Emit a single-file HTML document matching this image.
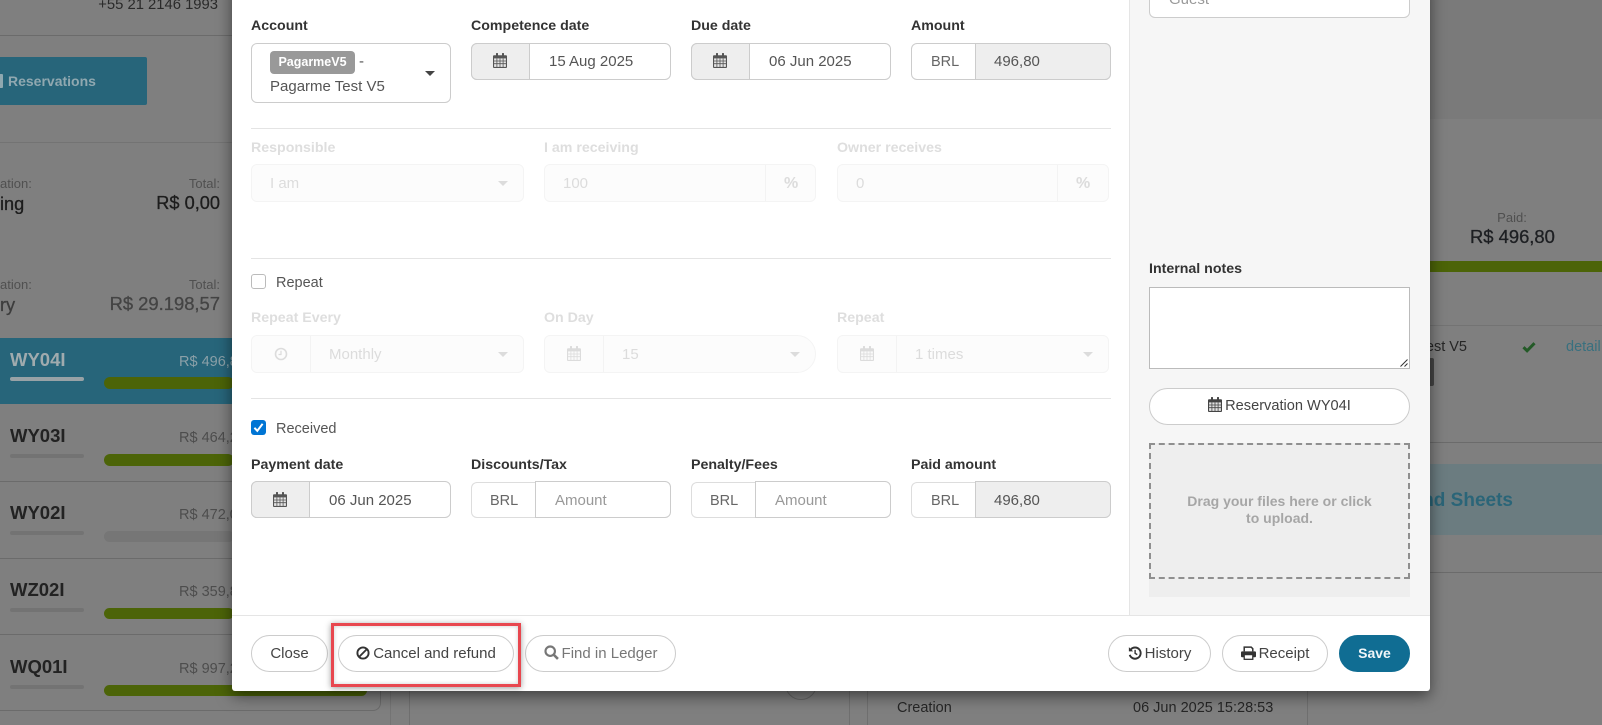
<!DOCTYPE html>
<html><head><meta charset="utf-8"><style>
html,body{margin:0;padding:0}
body{width:1602px;height:725px;overflow:hidden;position:relative;background:#7f7f7f;font-family:"Liberation Sans",sans-serif}
div,span.a{position:absolute;box-sizing:border-box}
svg{position:absolute;overflow:visible}
.t{white-space:nowrap;line-height:20px;height:20px}
.r{text-align:right}
.l{font-weight:bold;font-size:14.2px;color:#333;margin-top:1px}
.ld{font-weight:bold;font-size:14.2px;color:#dedede;margin-top:1px}
.f{border:1px solid #ccc;border-radius:6px;background:#fff}
.g{background:#eee}
.fd{border:1px solid #f4f4f4;border-radius:6px;background:#fcfcfc}
.v{font-size:15px;color:#555;margin-top:1px}
.vd{font-size:15px;color:#dcdcdc;margin-top:1px}
.brl{font-size:14.5px}
.sep{background:#e4e4e4;height:1px}
.b{border:1px solid #ccc;border-radius:19px;background:#fff;height:37px;top:635px;font-size:15px;color:#444;text-align:center;line-height:35px;white-space:nowrap}
.b svg{position:static;vertical-align:-2px;margin-right:3px}
.line{background:#6b6b6b;height:1px}
.bar{background:#4c6408;border-radius:6px}
.code{font-weight:bold;font-size:18.5px;color:#222}
.pr{font-size:14.5px;color:#4d4d4d}
.ul{background:#737373;height:4px;left:10px;width:74px;border-radius:2px}
.d{background:#ebebeb;width:1px}
.m{-webkit-text-stroke:.3px currentColor}
</style></head><body>
<svg width="0" height="0" style="position:absolute"><defs>
<symbol id="cal" viewBox="0 0 14 15"><path d="M0 3.2a1 1 0 0 1 1-1h12a1 1 0 0 1 1 1V14a1 1 0 0 1-1 1H1a1 1 0 0 1-1-1z" fill="currentColor"/><rect x="1.1" y="5.4" width="11.8" height="8.5" fill="#fff" opacity=".85"/><path d="M1 8h12M1 10.7h12M3.9 5.4V14M7 5.4V14M10.1 5.4V14" stroke="currentColor" stroke-width=".8" fill="none"/><rect x="3" y="0" width="2" height="4" rx=".6" fill="currentColor"/><rect x="9" y="0" width="2" height="4" rx=".6" fill="currentColor"/></symbol>
</defs></svg>

<!-- background left -->
<div class="t r" style="left:60px;width:158px;top:-5px;font-size:14.8px;color:#2a2a2a">+55 21 2146 1993</div>
<div class="line" style="left:0;width:232px;top:35px"></div>
<div style="left:0;top:57px;width:147px;height:48px;background:#27657a;border-radius:0 2px 2px 0"></div>
<div style="left:-3px;top:74px;width:6px;height:14px;background:#8fa8b0;border-radius:1px"></div>
<div class="t" style="left:8px;top:71px;font-size:14px;font-weight:bold;color:#90a8b0">Reservations</div>
<div class="line" style="left:0;width:232px;top:142px;background:#737373"></div>
<div class="t r" style="left:0;width:31px;top:174px;font-size:13px;color:#505050">ation:</div>
<div class="t m" style="left:0;top:194px;font-size:18.2px;color:#1d1d1d;width:24px;overflow:hidden;text-align:right">ing</div>
<div class="t r" style="left:120px;width:100px;top:174px;font-size:13px;color:#505050">Total:</div>
<div class="t r m" style="left:100px;width:120px;top:193px;font-size:18.2px;color:#1d1d1d">R$ 0,00</div>
<div class="t r" style="left:0;width:31px;top:275px;font-size:13px;color:#505050">ation:</div>
<div class="t m" style="left:0;top:295px;font-size:18.2px;color:#3d3d3d;width:14px;text-align:right">ry</div>
<div class="t r" style="left:120px;width:100px;top:275px;font-size:13px;color:#505050">Total:</div>
<div class="t r m" style="left:60px;width:160px;top:294px;font-size:18.4px;color:#444">R$ 29.198,57</div>

<div style="left:0;top:338px;width:240px;height:66px;background:#27657a"></div>
<div class="t code" style="left:10px;top:350px;color:#a0abae">WY04I</div>
<div style="left:10px;top:377px;width:74px;height:4px;background:#98a2a6;border-radius:2px"></div>
<div class="t pr" style="left:179px;top:352px;color:#8ba0a8">R$ 496,8</div>
<div class="bar" style="left:104px;top:377px;width:130px;height:12px"></div>

<div class="t code" style="left:10px;top:426px">WY03I</div>
<div class="ul" style="top:454px"></div>
<div class="t pr" style="left:179px;top:428px">R$ 464,2</div>
<div class="bar" style="left:104px;top:454px;width:130px;height:12px"></div>
<div class="line" style="left:0;width:232px;top:481px"></div>

<div class="t code" style="left:10px;top:503px">WY02I</div>
<div class="ul" style="top:531px"></div>
<div class="t pr" style="left:179px;top:505px">R$ 472,0</div>
<div class="bar" style="left:104px;top:531px;width:130px;height:11px;background:#767676"></div>
<div class="line" style="left:0;width:232px;top:558px"></div>

<div class="t code" style="left:10px;top:580px">WZ02I</div>
<div class="ul" style="top:608px"></div>
<div class="t pr" style="left:179px;top:582px">R$ 359,8</div>
<div class="bar" style="left:104px;top:608px;width:130px;height:11px"></div>
<div class="line" style="left:0;width:232px;top:634px"></div>

<div class="t code" style="left:10px;top:657px">WQ01I</div>
<div class="ul" style="top:685px"></div>
<div class="t pr" style="left:179px;top:659px">R$ 997,2</div>
<div class="bar" style="left:104px;top:685px;width:263px;height:11px"></div>
<div style="left:-5px;top:640px;width:386px;height:71px;border:1px solid #6b6b6b;border-top:0;border-left:0;border-radius:0 0 8px 0"></div>

<!-- background bottom -->
<div style="left:390px;top:690px;width:1px;height:35px;background:#747474"></div>
<div style="left:409px;top:690px;width:1px;height:35px;background:#6f6f6f"></div>
<div style="left:849px;top:690px;width:1px;height:35px;background:#6f6f6f"></div>
<div style="left:867px;top:690px;width:1px;height:35px;background:#6f6f6f"></div>
<div style="left:1307px;top:690px;width:1px;height:35px;background:#6f6f6f"></div>
<div style="left:785px;top:668px;width:32px;height:32px;border:1px solid #666;border-radius:50%"></div>
<div class="t" style="left:897px;top:698px;font-size:14.5px;color:#262626">Creation</div>
<div class="t" style="left:1133px;top:698px;font-size:14.5px;color:#262626">06 Jun 2025 15:28:53</div>

<!-- background right -->
<div style="left:1430px;top:0;width:172px;height:119px;background:#7a7a7a"></div>
<div class="t" style="left:1482px;width:60px;text-align:center;top:208px;font-size:13px;color:#4f4f4f">Paid:</div>
<div class="t m" style="left:1470px;top:227px;font-size:18.4px;color:#1d1f22">R$ 496,80</div>
<div style="left:1430px;top:261px;width:172px;height:11px;background:#4c6408"></div>
<div class="line" style="left:1430px;width:172px;top:325px;background:#737373"></div>
<div class="t" style="left:1423px;top:337px;width:44px;font-size:14.5px;color:#262626;text-align:right">est V5</div>
<svg style="left:1522px;top:341px" width="14" height="12" viewBox="0 0 14 12"><path d="M1.5 6.2l3.6 3.6L12.5 2.2" fill="none" stroke="#235a27" stroke-width="3"/></svg>
<div class="t" style="left:1566px;top:337px;font-size:14.5px;color:#38707f">detail</div>
<div style="left:1428px;top:358px;width:6px;height:28px;background:#454545;border-radius:2px"></div>
<div class="line" style="left:1430px;width:172px;top:442px"></div>
<div style="left:1430px;top:464px;width:172px;height:71px;background:#6b7c80"></div>
<div class="t r" style="left:1400px;width:113px;top:491px;font-size:19px;font-weight:bold;color:#2a6578">nd Sheets</div>
<div class="line" style="left:1430px;width:172px;top:572px"></div>

<!-- modal -->
<div style="left:232px;top:-20px;width:1198px;height:711px;background:#fff;border-radius:0 0 3px 3px;box-shadow:0 5px 15px rgba(0,0,0,.5)"></div>
<div style="left:1129px;top:0;width:301px;height:615px;background:#f6f6f6;border-left:1px solid #e5e5e5"></div>
<div style="left:232px;top:615px;width:1198px;height:1px;background:#e5e5e5"></div>

<!-- row 1 -->
<div class="t l" style="left:251px;top:15px">Account</div>
<div class="t l" style="left:471px;top:15px">Competence date</div>
<div class="t l" style="left:691px;top:15px">Due date</div>
<div class="t l" style="left:911px;top:15px">Amount</div>

<div class="f" style="left:251px;top:43px;width:200px;height:60px"></div>
<div style="left:270px;top:51px;width:85px;height:23px;background:#999;border-radius:4px;color:#fff;font-weight:bold;font-size:12.5px;text-align:center;line-height:22px">PagarmeV5</div>
<div class="t v" style="left:359px;top:51px">-</div>
<div class="t v" style="left:270px;top:76px">Pagarme Test V5</div>
<div style="left:425px;top:71px;width:0;height:0;border-left:5px solid transparent;border-right:5px solid transparent;border-top:5px solid #444"></div>

<div class="f" style="left:471px;top:43px;width:200px;height:37px"></div>
<div class="g" style="left:471px;top:43px;width:59px;height:37px;border:1px solid #ccc;border-radius:6px 0 0 6px"></div>
<svg style="left:493px;top:53px;color:#555" width="14" height="15"><use href="#cal"/></svg>
<div class="t v" style="left:549px;top:51px">15 Aug 2025</div>

<div class="f" style="left:691px;top:43px;width:200px;height:37px"></div>
<div class="g" style="left:691px;top:43px;width:59px;height:37px;border:1px solid #ccc;border-radius:6px 0 0 6px"></div>
<svg style="left:713px;top:53px;color:#555" width="14" height="15"><use href="#cal"/></svg>
<div class="t v" style="left:769px;top:51px">06 Jun 2025</div>

<div class="f" style="left:911px;top:43px;width:200px;height:37px"></div>
<div class="g" style="left:975px;top:43px;width:136px;height:37px;border:1px solid #ccc;border-radius:0 6px 6px 0"></div>
<div class="t v brl" style="left:931px;top:51px;color:#666">BRL</div>
<div class="t v" style="left:994px;top:51px">496,80</div>

<div class="sep" style="left:251px;width:860px;top:128px"></div>

<!-- row 2 disabled -->
<div class="t ld" style="left:251px;top:137px">Responsible</div>
<div class="t ld" style="left:544px;top:137px">I am receiving</div>
<div class="t ld" style="left:837px;top:137px">Owner receives</div>
<div class="fd" style="left:251px;top:164px;width:273px;height:38px"></div>
<div class="t vd" style="left:270px;top:173px">I am</div>
<div style="left:498px;top:181px;width:0;height:0;border-left:5px solid transparent;border-right:5px solid transparent;border-top:5px solid #dcdcdc"></div>
<div class="fd" style="left:544px;top:164px;width:272px;height:38px"></div>
<div class="d" style="left:765px;top:165px;height:36px;background:#f3f3f3"></div>
<div class="t vd" style="left:563px;top:173px">100</div>
<div class="t vd" style="left:784px;top:173px;font-weight:bold;font-size:16px">%</div>
<div class="fd" style="left:837px;top:164px;width:272px;height:38px"></div>
<div class="d" style="left:1057px;top:165px;height:36px;background:#f3f3f3"></div>
<div class="t vd" style="left:856px;top:173px">0</div>
<div class="t vd" style="left:1076px;top:173px;font-weight:bold;font-size:16px">%</div>

<div class="sep" style="left:251px;width:860px;top:258px"></div>

<div style="left:251px;top:274px;width:15px;height:15px;border:1px solid #bbb;border-radius:3px;background:#fff"></div>
<div class="t v" style="left:276px;top:272px;font-size:14.5px">Repeat</div>

<!-- row 3 disabled -->
<div class="t ld" style="left:251px;top:307px">Repeat Every</div>
<div class="t ld" style="left:544px;top:307px">On Day</div>
<div class="t ld" style="left:837px;top:307px">Repeat</div>
<div class="fd" style="left:251px;top:335px;width:273px;height:38px"></div>
<div class="d" style="left:310px;top:336px;height:36px;background:#f3f3f3"></div>
<svg style="left:274px;top:347px" width="14" height="14" viewBox="0 0 14 14"><circle cx="7" cy="7" r="5.5" fill="none" stroke="#dcdcdc" stroke-width="1.6"/><path d="M7 3.8V7.5H4.5" fill="none" stroke="#dcdcdc" stroke-width="1.2"/></svg>
<div class="t vd" style="left:329px;top:344px">Monthly</div>
<div style="left:498px;top:352px;width:0;height:0;border-left:5px solid transparent;border-right:5px solid transparent;border-top:5px solid #dcdcdc"></div>
<div class="fd" style="left:544px;top:335px;width:272px;height:38px;border-radius:6px 19px 19px 6px"></div>
<div class="d" style="left:603px;top:336px;height:36px;background:#f3f3f3"></div>
<svg style="left:567px;top:346px;color:#dcdcdc" width="14" height="15"><use href="#cal"/></svg>
<div class="t vd" style="left:622px;top:344px">15</div>
<div style="left:790px;top:352px;width:0;height:0;border-left:5px solid transparent;border-right:5px solid transparent;border-top:5px solid #dcdcdc"></div>
<div class="fd" style="left:837px;top:335px;width:272px;height:38px"></div>
<div class="d" style="left:896px;top:336px;height:36px;background:#f3f3f3"></div>
<svg style="left:860px;top:346px;color:#dcdcdc" width="14" height="15"><use href="#cal"/></svg>
<div class="t vd" style="left:915px;top:344px">1 times</div>
<div style="left:1083px;top:352px;width:0;height:0;border-left:5px solid transparent;border-right:5px solid transparent;border-top:5px solid #dcdcdc"></div>

<div class="sep" style="left:251px;width:860px;top:398px"></div>

<div style="left:251px;top:420px;width:15px;height:15px;border-radius:3px;background:#0075d4"></div>
<svg style="left:251px;top:420px" width="15" height="15" viewBox="0 0 15 15"><path d="M3.4 7.8l2.9 3 5.3-7" fill="none" stroke="#fff" stroke-width="2"/></svg>
<div class="t v" style="left:276px;top:418px;font-size:14.5px">Received</div>

<!-- row 4 -->
<div class="t l" style="left:251px;top:454px">Payment date</div>
<div class="t l" style="left:471px;top:454px">Discounts/Tax</div>
<div class="t l" style="left:691px;top:454px">Penalty/Fees</div>
<div class="t l" style="left:911px;top:454px">Paid amount</div>

<div class="f" style="left:251px;top:481px;width:200px;height:37px"></div>
<div class="g" style="left:251px;top:481px;width:59px;height:37px;border:1px solid #ccc;border-radius:6px 0 0 6px"></div>
<svg style="left:273px;top:492px;color:#555" width="14" height="15"><use href="#cal"/></svg>
<div class="t v" style="left:329px;top:490px">06 Jun 2025</div>

<div class="f" style="left:471px;top:482px;width:65px;height:36px;border-right:0;border-radius:6px 0 0 6px;border-color:#ddd"></div>
<div class="f" style="left:535px;top:481px;width:136px;height:37px;border-radius:0 6px 6px 0"></div>
<div class="t v brl" style="left:490px;top:490px;color:#666">BRL</div>
<div class="t v" style="left:555px;top:490px;color:#999">Amount</div>

<div class="f" style="left:691px;top:482px;width:65px;height:36px;border-right:0;border-radius:6px 0 0 6px;border-color:#ddd"></div>
<div class="f" style="left:755px;top:481px;width:136px;height:37px;border-radius:0 6px 6px 0"></div>
<div class="t v brl" style="left:710px;top:490px;color:#666">BRL</div>
<div class="t v" style="left:775px;top:490px;color:#999">Amount</div>

<div class="f" style="left:911px;top:482px;width:65px;height:36px;border-right:0;border-radius:6px 0 0 6px;border-color:#ddd"></div>
<div class="g" style="left:975px;top:481px;width:136px;height:37px;border:1px solid #ccc;border-radius:0 6px 6px 0"></div>
<div class="t v brl" style="left:931px;top:490px;color:#666">BRL</div>
<div class="t v" style="left:994px;top:490px">496,80</div>

<!-- right pane -->
<div class="f" style="left:1149px;top:-20px;width:261px;height:38px"></div>
<div class="t" style="left:1169px;top:-10px;font-size:15px;color:#999">Guest</div>
<div class="t l" style="left:1149px;top:258px">Internal notes</div>
<div style="left:1149px;top:287px;width:261px;height:82px;background:#fff;border:1px solid #bbb"></div>
<svg style="left:1399px;top:358px" width="10" height="10" viewBox="0 0 10 10"><path d="M1.5 8.5L8.5 1.5M5.5 8.5L8.5 5.5" stroke="#333" stroke-width="1"/></svg>
<div class="b" style="left:1149px;width:261px;top:388px;font-size:14.6px;color:#444"><svg style="color:#444;vertical-align:-2px" width="14" height="15"><use href="#cal"/></svg>Reservation WY04I</div>
<div style="left:1149px;top:443px;width:261px;height:154px;background:#eee"></div>
<div style="left:1149px;top:443px;width:261px;height:136px;border:2px dashed #8f8f8f"></div>
<div style="left:1160px;width:239px;top:493px;font-size:14px;font-weight:bold;color:#a6a6a6;text-align:center;line-height:17px">Drag your files here or click<br>to upload.</div>

<!-- footer buttons -->
<div class="b" style="left:251px;width:77px">Close</div>
<div class="b" style="left:338px;width:176px"><svg width="14" height="14" viewBox="0 0 14 14"><circle cx="7" cy="7" r="5.6" fill="none" stroke="#333" stroke-width="1.9"/><path d="M3 11L11 3" stroke="#333" stroke-width="1.9"/></svg>Cancel and refund</div>
<div class="b" style="left:525px;width:151px;color:#777"><svg width="15" height="15" viewBox="0 0 14 14"><circle cx="5.8" cy="5.8" r="4.4" fill="none" stroke="#777" stroke-width="2"/><path d="M9 9l4 4" stroke="#777" stroke-width="2.4"/></svg>Find in Ledger</div>
<div class="b" style="left:1108px;width:103px"><svg width="14" height="14" viewBox="0 0 13 13"><path d="M2.6 3.2A5.2 5.2 0 1 1 1.6 8.2" fill="none" stroke="#333" stroke-width="1.8"/><path d="M.8 1v4h4z" fill="#333"/><path d="M6.6 3.6v3.2l2 1.2" fill="none" stroke="#333" stroke-width="1.3"/></svg>History</div>
<div class="b" style="left:1222px;width:106px"><svg width="15" height="14" viewBox="0 0 14 13"><path d="M3 5V1h6.5L11 2.5V5" fill="none" stroke="#333" stroke-width="1.4"/><rect x="0" y="5" width="14" height="5.5" rx="1" fill="#333"/><rect x="3" y="8" width="8" height="4.4" fill="#fff" stroke="#333" stroke-width="1.2"/></svg>Receipt</div>
<div class="b" style="left:1339px;width:71px;background:#106d93;border-color:#106d93;color:#f0f6f9;font-weight:bold;font-size:14px;line-height:34px">Save</div>

<!-- red box -->
<div style="left:331px;top:623px;width:190px;height:64px;border:3px solid #e8474f;box-shadow:0 1px 6px rgba(0,0,0,.4),inset 0 0 4px rgba(0,0,0,.2)"></div>
</body></html>
